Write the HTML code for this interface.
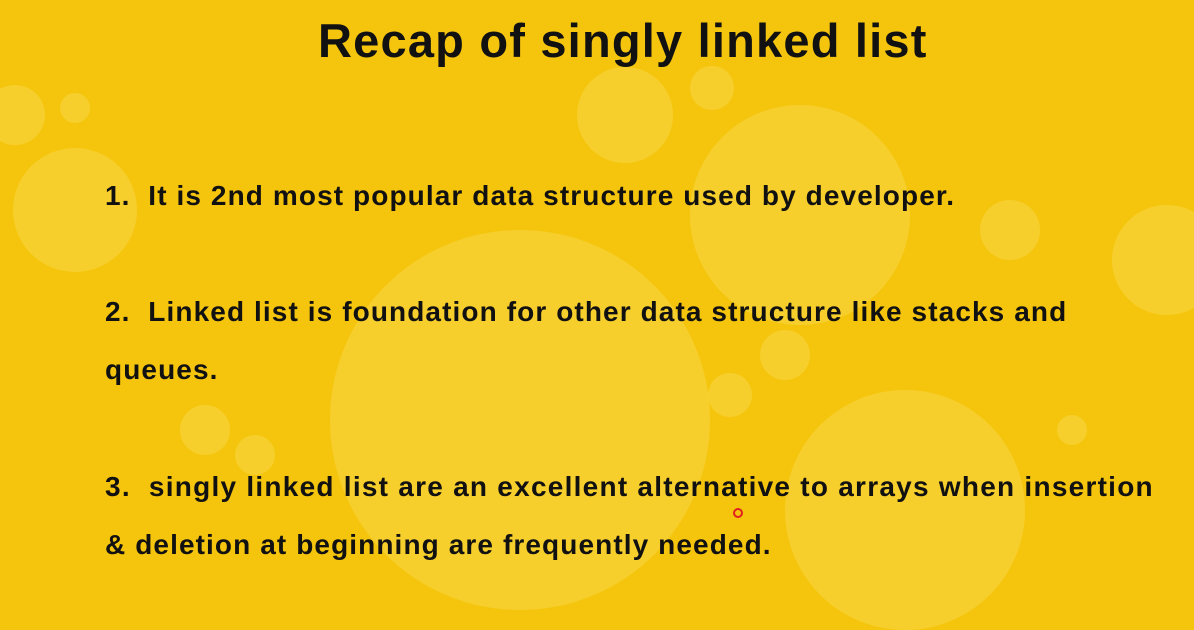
<!DOCTYPE html>
<html><head><style>
html,body{margin:0;padding:0}
body{width:1194px;height:624px;background:#f5c50e;position:relative;overflow:hidden;font-family:"Liberation Sans",sans-serif;color:#111}
.c{position:absolute;border-radius:50%;background:rgba(255,235,130,0.26)}
.t{position:absolute;white-space:nowrap;font-weight:bold;font-size:28px;letter-spacing:1.1px}
</style></head><body>
<div class="c" style="left:330px;top:230px;width:380px;height:380px"></div>
<div class="c" style="left:785px;top:390px;width:240px;height:240px"></div>
<div class="c" style="left:690px;top:105px;width:220px;height:220px"></div>
<div class="c" style="left:13px;top:148px;width:124px;height:124px"></div>
<div class="c" style="left:577px;top:67px;width:96px;height:96px"></div>
<div class="c" style="left:1112px;top:205px;width:110px;height:110px"></div>
<div class="c" style="left:-15px;top:85px;width:60px;height:60px"></div>
<div class="c" style="left:60px;top:93px;width:30px;height:30px"></div>
<div class="c" style="left:690px;top:66px;width:44px;height:44px"></div>
<div class="c" style="left:980px;top:200px;width:60px;height:60px"></div>
<div class="c" style="left:180px;top:405px;width:50px;height:50px"></div>
<div class="c" style="left:708px;top:373px;width:44px;height:44px"></div>
<div class="c" style="left:760px;top:330px;width:50px;height:50px"></div>
<div class="c" style="left:235px;top:435px;width:40px;height:40px"></div>
<div class="c" style="left:1057px;top:415px;width:30px;height:30px"></div>
<div class="t" style="left:318px;top:13px;font-size:47px;letter-spacing:1.2px">Recap of singly linked list</div>
<div class="t" style="left:105px;top:180px">1.&nbsp;&nbsp;It is 2nd most popular data structure used by developer.</div>
<div class="t" style="left:105px;top:296px">2.&nbsp;&nbsp;Linked list is foundation for other data structure like stacks and</div>
<div class="t" style="left:105px;top:354px">queues.</div>
<div class="t" style="left:105px;top:471px;letter-spacing:1.25px">3.&nbsp;&nbsp;singly linked list are an excellent alternative to arrays when insertion</div>
<div class="t" style="left:105px;top:529px">&amp; deletion at beginning are frequently needed.</div>
<div style="position:absolute;left:733px;top:508px;width:6px;height:6px;border:2px solid #e02020;border-radius:50%"></div>
</body></html>
